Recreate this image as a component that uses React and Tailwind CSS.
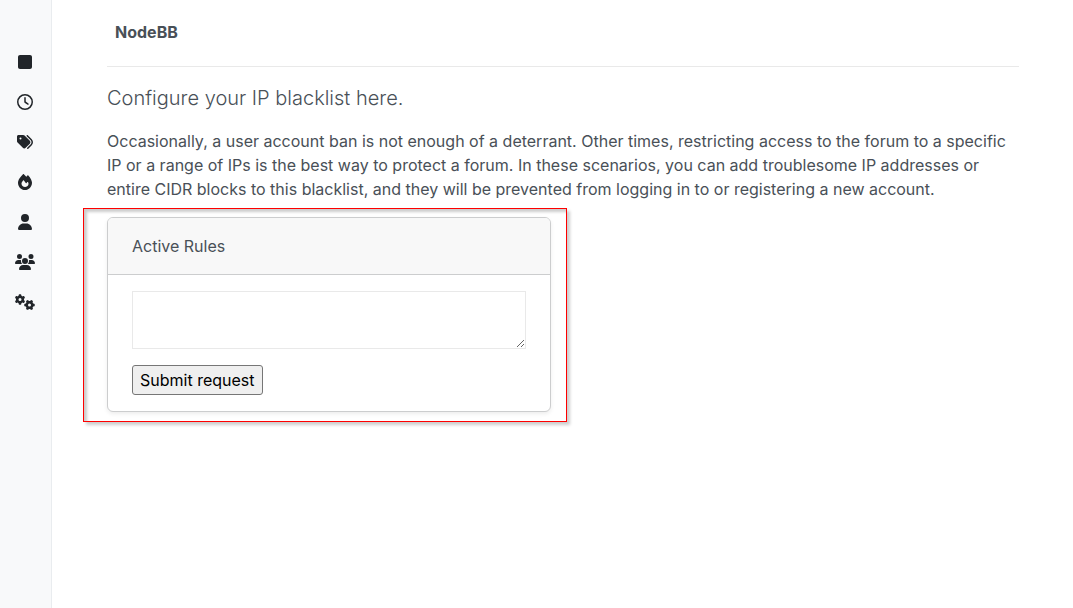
import {
  FaFire,
  FaGears,
  FaRegClock,
  FaSquare,
  FaTags,
  FaUser,
  FaUsers,
} from "react-icons/fa6";

const links = [
  { label: "Home", Icon: FaSquare },
  { label: "Recent", Icon: FaRegClock },
  { label: "Tags", Icon: FaTags },
  { label: "Popular", Icon: FaFire },
  { label: "Users", Icon: FaUser },
  { label: "Groups", Icon: FaUsers },
  { label: "Admin", Icon: FaGears },
];

function Sidebar() {
  return (
    <nav className="w-[52px] shrink-0 border-r border-[#e9ecef] bg-[#f8f9fa] pt-[42px]">
      <ul className="flex flex-col">
        {links.map(({ label, Icon }) => (
          <li key={label}>
            <a
              href="#"
              aria-label={label}
              className="flex h-10 items-center pl-[15px] text-[#212529]"
            >
              <Icon className="h-4 w-5" />
            </a>
          </li>
        ))}
      </ul>
    </nav>
  );
}

function RulesCard() {
  return (
    <section className="relative">
      <div className="overflow-hidden rounded-md border border-[#cccdce] bg-white shadow-[0_2px_4px_rgba(0,0,0,0.075)]">
        <h2 className="border-b border-[#cccdce] bg-[#f8f8f8] px-6 py-4">
          <label htmlFor="rules">Active Rules</label>
        </h2>
        <form className="px-6 py-4" onSubmit={(e) => e.preventDefault()}>
          <textarea
            id="rules"
            className="mb-4 block h-[58px] w-full border border-[#e9e9e9] p-1 outline-none"
          />
          <button
            type="submit"
            className="block h-[30px] rounded-[3px] border border-[#767676] bg-[#efefef] px-[7px] text-black"
          >
            Submit request
          </button>
        </form>
      </div>
      <div className="pointer-events-none absolute -top-[9px] -right-4 -bottom-[10px] -left-6 border border-[#ff0000] shadow-[3px_3px_3px_rgba(0,0,0,0.2),inset_3px_3px_3px_rgba(0,0,0,0.2)]" />
    </section>
  );
}

export default function App() {
  return (
    <div className="flex min-h-screen bg-white font-['Inter',sans-serif] text-base text-[#495057]">
      <Sidebar />
      <main className="min-w-0 flex-1 pr-[54px] pl-[55px]">
        <header className="mb-4 border-b border-[#e9e9e9] px-2 pt-5 pb-[22px]">
          <h1 className="font-bold">NodeBB</h1>
        </header>
        <p className="mb-4 text-xl leading-[30px] font-light">
          Configure your IP blacklist here.
        </p>
        <p className="mb-4">
          Occasionally, a user account ban is not enough of a deterrant. Other
          times, restricting access to the forum to a specific IP or a range of
          IPs is the best way to protect a forum. In these scenarios, you can
          add troublesome IP addresses or entire CIDR blocks to this blacklist,
          and they will be prevented from logging in to or registering a new
          account.
        </p>
        <div className="grid grid-cols-2 gap-6">
          <RulesCard />
        </div>
      </main>
    </div>
  );
}
